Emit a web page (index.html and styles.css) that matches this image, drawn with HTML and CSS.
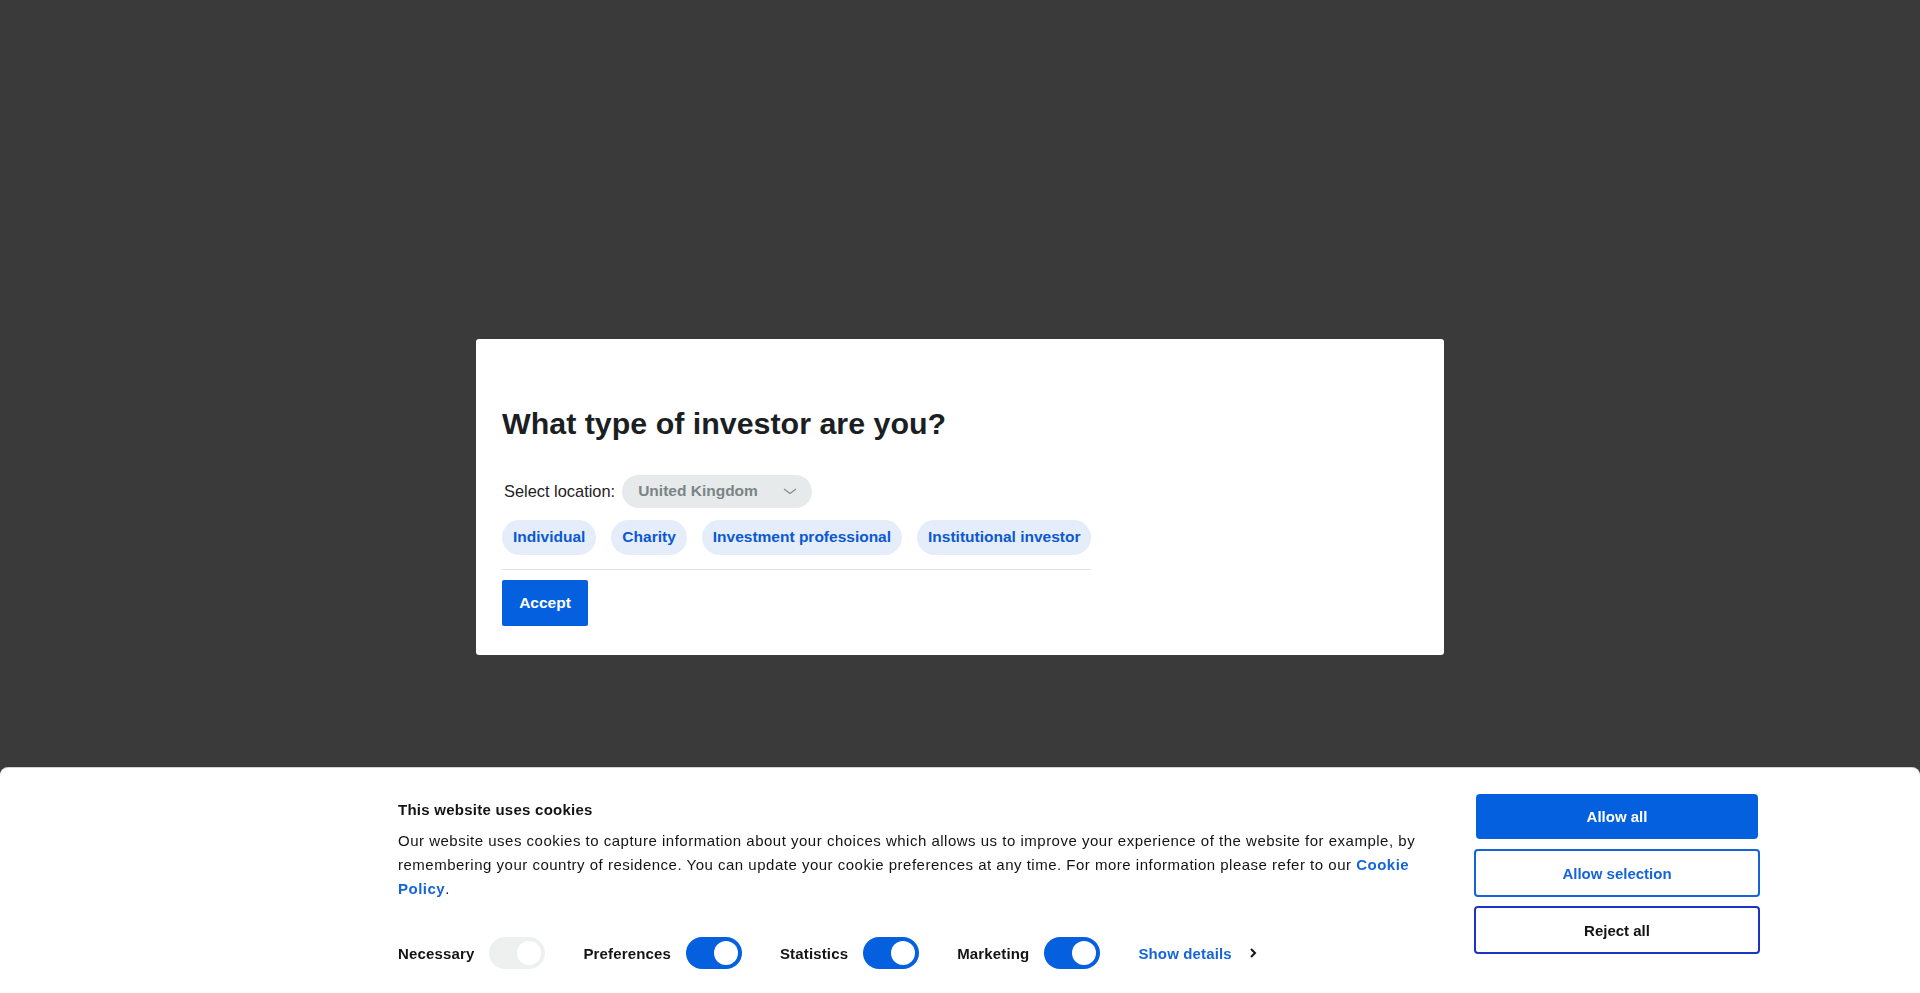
FILE: index.html
```html
<!DOCTYPE html>
<html lang="en">
<head>
<meta charset="utf-8">
<title>What type of investor are you?</title>
<link rel="stylesheet" href="styles.css">
</head>
<body>
<div class="overlay">
  <div class="modal">
    <h1 class="modal-title">What type of investor are you?</h1>
    <div class="location">
      <span class="location-label">Select location:</span>
      <div class="select">
        <span class="select-value">United Kingdom</span>
        <svg class="select-chevron" width="14" height="7" viewBox="0 0 14 7"><polyline points="1,1 7,5.5 13,1" fill="none" stroke="#858b8d" stroke-width="1.2"/></svg>
      </div>
    </div>
    <div class="types">
      <div class="type-list">
        <span class="pill">Individual</span>
        <span class="pill">Charity</span>
        <span class="pill">Investment professional</span>
        <span class="pill">Institutional investor</span>
      </div>
    </div>
    <button class="accept">Accept</button>
  </div>
</div>

<div class="cookie-banner">
  <div class="cookie-text">
    <h2 class="cookie-title">This website uses cookies</h2>
    <p class="cookie-body">Our website uses cookies to capture information about your choices which allows us to improve your experience of the website for example, by remembering your country of residence. You can update your cookie preferences at any time. For more information please refer to our <a class="cookie-link" href="#">Cookie Policy</a>.</p>
    <div class="consent-row">
      <div class="consent">
        <span class="consent-label">Necessary</span>
        <span class="toggle toggle-disabled"><span class="knob"></span></span>
      </div>
      <div class="consent">
        <span class="consent-label">Preferences</span>
        <span class="toggle"><span class="knob"></span></span>
      </div>
      <div class="consent">
        <span class="consent-label">Statistics</span>
        <span class="toggle"><span class="knob"></span></span>
      </div>
      <div class="consent">
        <span class="consent-label">Marketing</span>
        <span class="toggle"><span class="knob"></span></span>
      </div>
      <a class="details" href="#">Show details
        <svg class="details-chevron" width="8" height="12" viewBox="0 0 8 12"><polyline points="2,2 6,6 2,10" fill="none" stroke="#141414" stroke-width="2"/></svg>
      </a>
    </div>
  </div>
  <div class="cookie-buttons">
    <button class="cb-btn cb-allow">Allow all</button>
    <button class="cb-btn cb-selection">Allow selection</button>
    <button class="cb-btn cb-reject">Reject all</button>
  </div>
</div>
</body>
</html>
```

FILE: styles.css
```css
* { box-sizing: border-box; }

html, body {
  margin: 0;
  padding: 0;
  height: 100%;
  overflow: hidden;
}

body {
  background: #3a3a3a;
  font-family: "Liberation Sans", Arial, sans-serif;
}

.overlay {
  min-height: 100vh;
  display: flex;
  align-items: center;
  justify-content: center;
}

.modal {
  width: 968px;
  background: #ffffff;
  border-radius: 3px;
  padding: 66px 26px 29px;
}

.modal-title {
  margin: 0;
  font-size: 30.4px;
  line-height: 36px;
  font-weight: 700;
  color: #1b1f23;
  letter-spacing: 0;
}

.location {
  display: flex;
  align-items: center;
  margin-top: 34px;
  height: 33px;
}

.location-label {
  font-size: 16.4px;
  color: #1e2124;
  margin-left: 2px;
  margin-right: 7px;
}

.select {
  width: 190px;
  height: 33px;
  border-radius: 17px;
  background: #e7eaea;
  display: flex;
  align-items: center;
  justify-content: space-between;
  padding: 0 15px 0 16px;
}

.select-value {
  font-size: 15.5px;
  font-weight: 700;
  color: #7b8486;
}

.select-chevron { display: block; }

.types {
  width: fit-content;
  margin-top: 12px;
  padding-bottom: 14px;
  border-bottom: 1px solid #e2e4e6;
}

.type-list {
  display: flex;
  gap: 15px;
}

.pill {
  height: 35px;
  padding: 0 11px;
  border-radius: 18px;
  background: #e5edfa;
  color: #0a58d2;
  font-size: 15.5px;
  font-weight: 700;
  display: flex;
  align-items: center;
}

.accept {
  margin-top: 10px;
  height: 46px;
  width: 86px;
  border: 0;
  border-radius: 2px;
  background: #0560e0;
  color: #ffffff;
  font-family: "Liberation Sans", Arial, sans-serif;
  font-size: 15.5px;
  font-weight: 700;
  padding: 0;
}

/* Cookie banner */
.cookie-banner {
  position: fixed;
  left: 0;
  right: 0;
  bottom: 0;
  background: #ffffff;
  border-radius: 8px 8px 0 0;
  box-shadow: 0 -1px 0 #d4d4d4;
  display: flex;
  justify-content: space-between;
  padding: 26px 160px 24px 398px;
  color: #141414;
}

.cookie-text {
  width: 1040px;
  flex: none;
  padding-top: 4px;
}

.cookie-title {
  margin: 0;
  font-size: 15px;
  line-height: 24px;
  font-weight: 700;
  letter-spacing: 0.25px;
  color: #141414;
}

.cookie-body {
  margin: 7px 0 0;
  font-size: 15px;
  line-height: 24px;
  letter-spacing: 0.5px;
  color: #141414;
}

.cookie-link {
  color: #1565d8;
  font-weight: 700;
  text-decoration: none;
}

.consent-row {
  display: flex;
  align-items: center;
  gap: 38px;
  margin-top: 36px;
  height: 32px;
}

.consent {
  display: flex;
  align-items: center;
  gap: 15px;
}

.consent-label {
  font-size: 15px;
  font-weight: 700;
  letter-spacing: 0.15px;
  color: #141414;
}

.toggle {
  width: 56px;
  height: 32px;
  border-radius: 16px;
  background: #0560e0;
  display: flex;
  align-items: center;
  justify-content: flex-end;
  padding-right: 4px;
}

.toggle-disabled {
  background: #eef0f0;
}

.knob {
  width: 24px;
  height: 24px;
  border-radius: 50%;
  background: #ffffff;
}

.details {
  display: flex;
  align-items: center;
  gap: 17px;
  color: #1565d8;
  font-size: 15px;
  font-weight: 700;
  letter-spacing: 0.15px;
  text-decoration: none;
}

.details-chevron { display: block; }

.cookie-buttons {
  width: 286px;
  flex: none;
  display: flex;
  flex-direction: column;
}

.cb-btn {
  font-family: "Liberation Sans", Arial, sans-serif;
  font-size: 15px;
  font-weight: 700;
  border-radius: 4px;
  background: #ffffff;
  padding: 0;
  cursor: pointer;
}

.cb-allow {
  height: 45px;
  margin: 0 2px;
  border: 0;
  background: #0560e0;
  color: #ffffff;
}

.cb-selection {
  height: 48px;
  margin-top: 10px;
  border: 2px solid #1565d8;
  color: #1565d8;
}

.cb-reject {
  height: 48px;
  margin-top: 9px;
  border: 2px solid #1a34c4;
  color: #141414;
}
```
